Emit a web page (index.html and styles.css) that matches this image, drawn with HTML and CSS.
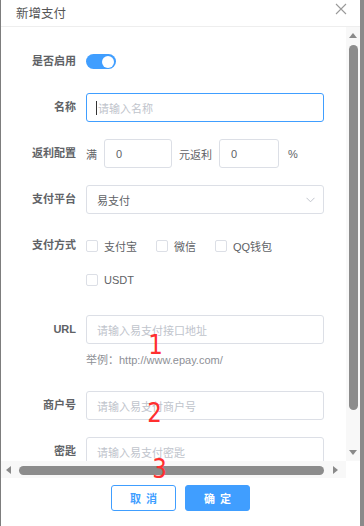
FILE: index.html
```html
<!DOCTYPE html>
<html lang="zh-CN">
  <head>
    <meta charset="UTF-8" />
    <meta name="viewport" content="width=device-width, initial-scale=1.0" />
    <title>新增支付</title>
    <link rel="stylesheet" href="styles.css">
  </head>
  <body>
    <div class="win">
      <!-- Header -->
      <div class="dlg-head">
        <span class="dlg-title">新增支付</span>
        <span class="dlg-close">
          <svg width="12" height="12" viewBox="0 0 12 12"><path d="M1 1L11 11M11 1L1 11" stroke="#9a9a9a" stroke-width="1.1" fill="none"/></svg>
        </span>
      </div>

      <!-- Body with scrollbars -->
      <div class="dlg-body">
        <div class="viewport">
          <div class="form">
            <div class="item">
              <label class="lbl">是否启用</label>
              <div class="ctrl"><span class="switch"><span class="knob"></span></span></div>
            </div>

            <div class="item">
              <label class="lbl">名称</label>
              <div class="ctrl"><div class="input focus"><span class="caret"></span><span class="ph">请输入名称</span></div></div>
            </div>

            <div class="item">
              <label class="lbl">返利配置</label>
              <div class="ctrl inline">
                <span class="txt">满</span>
                <div class="input num w1"><span class="val">0</span></div>
                <span class="txt">元返利</span>
                <div class="input num w2"><span class="val">0</span></div>
                <span class="txt pct">%</span>
              </div>
            </div>

            <div class="item">
              <label class="lbl">支付平台</label>
              <div class="ctrl">
                <div class="input select">
                  <span class="val">易支付</span>
                  <svg class="chev" width="9" height="6" viewBox="0 0 9 6"><path d="M0.5 0.8L4.5 4.8L8.5 0.8" stroke="#c0c4cc" stroke-width="1" fill="none"/></svg>
                </div>
              </div>
            </div>

            <div class="item item-check">
              <label class="lbl">支付方式</label>
              <div class="ctrl checks">
                <span class="check"><span class="box"></span><span>支付宝</span></span>
                <span class="check"><span class="box"></span><span>微信</span></span>
                <span class="check"><span class="box"></span><span>QQ钱包</span></span>
                <span class="check"><span class="box"></span><span>USDT</span></span>
              </div>
            </div>

            <div class="item item-url">
              <label class="lbl">URL</label>
              <div class="ctrl">
                <div class="input"><span class="ph">请输入易支付接口地址</span></div>
                <div class="hint">举例：http://www.epay.com/</div>
              </div>
            </div>

            <div class="item">
              <label class="lbl">商户号</label>
              <div class="ctrl"><div class="input"><span class="ph">请输入易支付商户号</span></div></div>
            </div>

            <div class="item">
              <label class="lbl">密匙</label>
              <div class="ctrl"><div class="input"><span class="ph">请输入易支付密匙</span></div></div>
            </div>
          </div>
        </div>

        <div class="vbar">
          <span class="tri up"></span>
          <span class="vthumb"></span>
          <span class="tri down"></span>
        </div>
      </div>

      <div class="hbar">
        <span class="tri left"></span>
        <span class="hthumb"></span>
        <span class="tri right"></span>
      </div>

      <!-- Footer -->
      <div class="dlg-foot">
        <button class="btn btn-plain">取消</button>
        <button class="btn btn-primary">确定</button>
      </div>

      <!-- hand-written markers -->
      <span class="mark m1">1</span>
      <span class="mark m2">2</span>
      <span class="mark m3">3</span>
    </div>
  </body>
</html>
```

FILE: styles.css
```css
body {
  margin: 0;
  font-family: "Liberation Sans", "Noto Sans CJK SC", sans-serif;
  background: #fff;
}

.win {
  position: relative;
  width: 364px;
  height: 526px;
  box-sizing: border-box;
  border-left: 1px solid #7d7d7d;
  border-right: 4px solid #8a8a8a;
  background: #fff;
  overflow: hidden;
  display: flex;
  flex-direction: column;
}

.dlg-head {
  height: 26px;
  border-bottom: 1px solid #eeeeee;
  display: flex;
  align-items: center;
  justify-content: space-between;
  padding: 0 13px 0 15px;
  flex-shrink: 0;
}

.dlg-title {
  font-size: 12.5px;
  color: #555;
  margin-top: -1px;
}

.dlg-close {
  display: flex;
  margin-top: -8px;
}

.dlg-body {
  height: 434px;
  display: flex;
  flex-shrink: 0;
}

.viewport {
  flex: 1;
  overflow: hidden;
}

.vbar {
  width: 14px;
  background: #f8f8f8;
  display: flex;
  flex-direction: column;
  align-items: center;
  padding: 6px 0 0;
  box-sizing: border-box;
}

.vthumb {
  width: 9px;
  height: 365px;
  background: #8c8c8c;
  border-radius: 5px;
  margin: 7px 0 40px;
}

.tri {
  width: 0;
  height: 0;
  border: 4px solid transparent;
}

.tri.up {
  border-bottom: 5px solid #8a8a8a;
  border-top: 0;
}

.tri.down {
  border-top: 5px solid #8a8a8a;
  border-bottom: 0;
}

.tri.left {
  border-right: 5px solid #8a8a8a;
  border-left: 0;
}

.tri.right {
  border-left: 5px solid #8a8a8a;
  border-right: 0;
}

.hbar {
  width: 345px;
  height: 17px;
  background: #f8f8f8;
  display: flex;
  align-items: center;
  padding: 0 0 0 5px;
  box-sizing: border-box;
  flex-shrink: 0;
}

.hthumb {
  width: 305px;
  height: 9px;
  background: #8c8c8c;
  border-radius: 5px;
  margin: 1px 9px 0 8px;
}

.dlg-foot {
  flex: 1;
  display: flex;
  justify-content: center;
  gap: 9px;
  padding-top: 7px;
}

.btn {
  width: 65px;
  height: 26px;
  border-radius: 3px;
  font-family: "Noto Sans CJK SC", sans-serif;
  font-size: 11px;
  font-weight: 700;
  letter-spacing: 5px;
  text-indent: 5px;
  cursor: pointer;
}

.btn-plain {
  background: #fff;
  border: 1px solid #409eff;
  color: #409eff;
}

.btn-primary {
  background: #409eff;
  border: 1px solid #409eff;
  color: #fff;
}

/* form */
.form {
  padding-top: 20px;
  font-size: 11px;
  color: #606266;
}

.item {
  display: flex;
  align-items: flex-start;
  margin-bottom: 17px;
}

.item-check {
  margin-bottom: 21px;
}

.item-url {
  margin-bottom: 22px;
}

.lbl {
  width: 85px;
  flex-shrink: 0;
  box-sizing: border-box;
  padding-right: 10px;
  text-align: right;
  line-height: 29px;
  font-family: "Liberation Sans", "Noto Sans CJK SC", sans-serif;
  font-weight: 700;
  font-size: 11px;
  color: #606266;
}

.ctrl {
  min-height: 29px;
  display: flex;
  flex-direction: column;
  justify-content: center;
}

.ctrl.inline {
  flex-direction: row;
  align-items: center;
}

.input {
  width: 238px;
  height: 29px;
  box-sizing: border-box;
  border: 1px solid #dcdfe6;
  border-radius: 3px;
  display: flex;
  align-items: center;
  padding: 0 10px;
  font-family: "Noto Sans CJK SC", sans-serif;
}

.input.focus {
  border-color: #409eff;
  padding-left: 9px;
}

.caret {
  width: 1px;
  height: 14px;
  background: #333;
  margin-right: 1px;
}

.ph {
  color: #c0c4cc;
}

.val {
  color: #606266;
}

.input.num {
  padding-left: 11px;
  font-family: "Liberation Sans", sans-serif;
}

.w1 {
  width: 68px;
  margin: 0 7px;
}

.w2 {
  width: 60px;
  margin: 0 8px 0 7px;
}

.txt {
  font-family: "Noto Sans CJK SC", sans-serif;
}

.pct {
  font-family: "Liberation Sans", sans-serif;
  margin-left: 1px;
}

.select {
  justify-content: space-between;
  padding-right: 8px;
}

.checks {
  flex-direction: row;
  flex-wrap: wrap;
  justify-content: flex-start;
  width: 238px;
  row-gap: 5px;
  column-gap: 0;
}

.check {
  display: flex;
  align-items: center;
  height: 29px;
  margin-right: 19px;
  font-family: "Liberation Sans", "Noto Sans CJK SC", sans-serif;
  color: #606266;
}

.box {
  width: 12px;
  height: 12px;
  box-sizing: border-box;
  border: 1px solid #dcdfe6;
  border-radius: 2px;
  margin-right: 6px;
  background: #fff;
}

.hint {
  margin-top: 8px;
  line-height: 17px;
  color: #8e9096;
  font-family: "Liberation Sans", "Noto Sans CJK SC", sans-serif;
}

.switch {
  width: 30px;
  height: 15px;
  border-radius: 8px;
  background: #409eff;
  position: relative;
  display: block;
}

.knob {
  position: absolute;
  top: 1.5px;
  right: 2px;
  width: 12px;
  height: 12px;
  border-radius: 50%;
  background: #fff;
}

/* red hand-drawn digits */
.mark {
  position: absolute;
  color: #ff2f2f;
  font-family: "DejaVu Sans", sans-serif;
  font-size: 27px;
  line-height: 1;
  transform: scaleX(0.85);
}

.m1 {
  left: 146px;
  top: 331px;
}

.m2 {
  left: 145px;
  top: 399px;
}

.m3 {
  left: 150px;
  top: 455px;
}
```
